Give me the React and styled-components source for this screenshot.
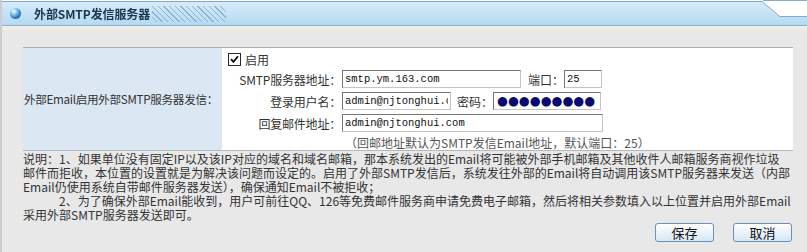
import React from "react";
import styled, { createGlobalStyle } from "styled-components";

const GlobalStyle = createGlobalStyle`
  html, body { margin: 0; padding: 0; background: #e8e8e8; }
  body {
    font-family: "Noto Sans CJK SC", "Noto Sans", sans-serif;
    font-size: 12px;
    color: #333;
  }
  * { box-sizing: border-box; }
`;

const Page = styled.div`
  width: 807px;
  height: 252px;
  border-left: 2px solid #cdcdcd;
  overflow: hidden;
  background: #e8e8e8;
`;

const Header = styled.div`
  height: 26px;
  padding-top: 2px;
  background: linear-gradient(#86aac6, #86aac6) no-repeat right top / 44px 1px, #fff;
`;

const HeaderShadow = styled.div`
  height: 24px;
  filter: drop-shadow(0 -1px 0 #86aac6);
`;

const HeaderBar = styled.div`
  height: 24px;
  display: flex;
  align-items: center;
  padding-left: 8px;
  background: linear-gradient(#d6ebf9, #b4daf3);
  border-bottom: 1px solid #8fb0c8;
  clip-path: polygon(0 0, 760px 0, 778px 15px, 100% 15px, 100% 100%, 0 100%);
`;

const Ball = styled.span`
  width: 11px;
  height: 11px;
  border-radius: 50%;
  background: radial-gradient(circle at 35% 30%, #ffffff 0, #9fd2f5 25%, #2f7fc4 60%, #164c86 100%);
  margin-right: 13px;
  flex: none;
`;

const Title = styled.span`
  font-weight: bold;
  font-size: 12px;
  color: #1b3550;
  letter-spacing: -0.1px;
`;

const Stripes = styled.span`
  width: 74px;
  height: 16px;
  margin-left: 2px;
  background: repeating-linear-gradient(45deg, transparent 0 3px, #8ab3d3 3px 4px);
`;

const Main = styled.div`
  padding: 21px 14px 0 21px;
  height: 226px;
  background: linear-gradient(#f3f0e4, #e8e8e8 6px);
`;

const Panel = styled.div`
  display: grid;
  grid-template-columns: 199px 1fr;
  border-top: 1px solid #a3b0bb;
  border-bottom: 1px solid #b3b9be;
`;

const LabelCell = styled.div`
  background: #dbe8f4;
  display: flex;
  align-items: center;
  padding-left: 1px;
  color: #333;
  white-space: nowrap;
  font-size: 11.6px;
  letter-spacing: -0.3px;
`;

const FieldCell = styled.div`
  background: #fff;
  display: flex;
  flex-direction: column;
  gap: 4px;
  padding: 4px 0 0 6px;
`;

const CheckRow = styled.label`
  height: 14px;
  display: flex;
  align-items: center;
  gap: 4px;
  color: #333;
`;

const CheckBox = styled.span`
  width: 13px;
  height: 13px;
  border: 1px solid #2a2a2a;
  background: #fff;
  display: flex;
  align-items: center;
  justify-content: center;
  margin-top: 1px;
`;

const FormRow = styled.div`
  display: grid;
  grid-template-columns: 114px auto;
  align-items: center;
  height: 18px;
`;

const FieldLabel = styled.span`
  text-align: right;
  white-space: nowrap;
  color: #333;
  padding-right: 1px;
  letter-spacing: -0.2px;
`;

const Controls = styled.div`
  display: flex;
  align-items: center;
`;

const Input = styled.input`
  width: ${(p) => p.$w}px;
  height: 18px;
  border: 1px solid;
  border-color: #767676 #c4c4c4 #c4c4c4 #767676;
  padding: 0 2px;
  font-family: "Liberation Mono", monospace;
  font-size: 10.5px;
  color: #111;
  background: #fff;
  outline: none;
`;

const Mask = styled(Input)`
  font-family: "DejaVu Sans", sans-serif;
  font-size: 12.5px;
  letter-spacing: 0;
  color: #0b0b6e;
  padding: 0 0 1px 3px;
`;

const InlineLabel = styled.span`
  margin-left: ${(p) => p.$ml}px;
  white-space: nowrap;
  color: #333;
`;

const Note = styled.div`
  height: 14px;
  line-height: 14px;
  padding-left: 117px;
  color: #555;
  white-space: nowrap;
`;

const Explain = styled.div`
  margin-top: 1px;
  line-height: 14px;
  color: #333;
`;

const Line = styled.div`
  white-space: nowrap;
  height: 14px;
  padding-left: ${(p) => p.$indent || 0}px;
`;

const Buttons = styled.div`
  display: flex;
  justify-content: flex-end;
  gap: 19px;
  margin-top: 1px;
  padding-right: 1px;
`;

const Button = styled.button`
  width: 59px;
  height: 19px;
  border: 1px solid #6b8fb6;
  border-radius: 3px;
  background: linear-gradient(#fdfeff, #d8e7f5);
  font-family: "Noto Sans CJK SC", sans-serif;
  font-size: 13px;
  line-height: 15px;
  color: #111;
  padding: 0;
  cursor: pointer;
`;

export default function App() {
  return (
    <>
      <GlobalStyle />
      <Page>
        <Header>
          <HeaderShadow>
            <HeaderBar>
              <Ball />
              <Title>外部SMTP发信服务器</Title>
              <Stripes />
            </HeaderBar>
          </HeaderShadow>
        </Header>
        <Main>
          <Panel>
            <LabelCell>外部Email启用外部SMTP服务器发信：</LabelCell>
            <FieldCell>
              <CheckRow>
                <CheckBox>
                  <svg width="9" height="9" viewBox="0 0 9 9">
                    <path d="M1 4.2 L3.4 6.8 L8 1.2" fill="none" stroke="#111" strokeWidth="1.8" />
                  </svg>
                </CheckBox>
                启用
              </CheckRow>
              <FormRow>
                <FieldLabel>SMTP服务器地址：</FieldLabel>
                <Controls>
                  <Input $w={179} defaultValue="smtp.ym.163.com" />
                  <InlineLabel $ml={7}>端口：</InlineLabel>
                  <Input $w={38} defaultValue="25" />
                </Controls>
              </FormRow>
              <FormRow>
                <FieldLabel>登录用户名：</FieldLabel>
                <Controls>
                  <Input $w={109} defaultValue="admin@njtonghui.com" />
                  <InlineLabel $ml={6}>密码：</InlineLabel>
                  <Mask $w={108} readOnly aria-label="密码" value="●●●●●●●●●" />
                </Controls>
              </FormRow>
              <FormRow>
                <FieldLabel>回复邮件地址：</FieldLabel>
                <Controls>
                  <Input $w={261} defaultValue="admin@njtonghui.com" />
                </Controls>
              </FormRow>
              <Note>（回邮地址默认为SMTP发信Email地址，默认端口：25）</Note>
            </FieldCell>
          </Panel>
          <Explain>
            <Line>说明：1、如果单位没有固定IP以及该IP对应的域名和域名邮箱，那本系统发出的Email将可能被外部手机邮箱及其他收件人邮箱服务商视作垃圾</Line>
            <Line>邮件而拒收，本位置的设置就是为解决该问题而设定的。启用了外部SMTP发信后，系统发往外部的Email将自动调用该SMTP服务器来发送（内部</Line>
            <Line>Email仍使用系统自带邮件服务器发送），确保通知Email不被拒收；</Line>
            <Line $indent={36}>2、为了确保外部Email能收到，用户可前往QQ、126等免费邮件服务商申请免费电子邮箱，然后将相关参数填入以上位置并启用外部Email</Line>
            <Line>采用外部SMTP服务器发送即可。</Line>
          </Explain>
          <Buttons>
            <Button>保存</Button>
            <Button>取消</Button>
          </Buttons>
        </Main>
      </Page>
    </>
  );
}
